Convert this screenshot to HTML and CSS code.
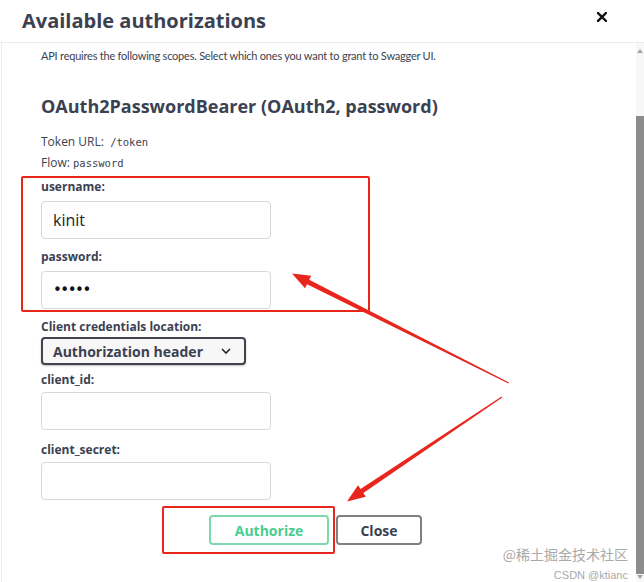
FILE: index.html
```html
<!DOCTYPE html>
<html lang="en">
<head>
<meta charset="utf-8">
<title>Available authorizations</title>
<link rel="stylesheet" href="styles.css">
</head>
<body>
<div class="modal">
  <div class="modal-header">
    <h3 class="modal-title">Available authorizations</h3>
    <button class="close-x" aria-label="close">
      <svg width="10" height="10" viewBox="0 0 10 10"><path d="M1 1 L9 9 M9 1 L1 9" stroke="#111" stroke-width="2.4" stroke-linecap="square"/></svg>
    </button>
  </div>
  <div class="modal-body">
    <div class="content">
      <p class="scopes">API requires the following scopes. Select which ones you want to grant to Swagger UI.</p>
      <h4 class="scheme">OAuth2PasswordBearer (OAuth2, password)</h4>
      <p class="meta meta-url">Token URL:&nbsp; <code>/token</code></p>
      <p class="meta meta-flow">Flow: <code>password</code></p>
      <label class="lbl lbl-first">username:</label>
      <div class="input">kinit</div>
      <label class="lbl">password:</label>
      <div class="input dots">•••••</div>
      <label class="lbl">Client credentials location:</label>
      <div class="select">
        <span>Authorization header</span>
        <svg width="10" height="6" viewBox="0 0 10 6"><path d="M1 1 L5 5 L9 1" fill="none" stroke="#222" stroke-width="1.6"/></svg>
      </div>
      <label class="lbl lbl-cid">client_id:</label>
      <div class="input"></div>
      <label class="lbl lbl-cs">client_secret:</label>
      <div class="input"></div>
      <div class="actions">
        <button class="btn authorize">Authorize</button>
        <button class="btn close">Close</button>
      </div>
    </div>
    <div class="scrollbar">
      <div class="arrow-up"></div>
      <div class="thumb"></div>
      <div class="arrow-down"></div>
    </div>
  </div>

  <div class="mark mark-fields"></div>
  <div class="mark mark-button"></div>
  <svg class="arrows" width="644" height="582" viewBox="0 0 644 582">
    <polygon fill="#e8261d" points="509,382.6 309.2,279.8 311.2,275.8 292,273.5 305,288.3 307,284.3 508.4,383.6"/>
    <polygon fill="#e8261d" points="502.3,397.4 363.3,493.1 365.8,496.8 347,501.5 358,485.2 360.5,488.9 501.6,396.4"/>
  </svg>
  <div class="watermark">
    <div class="wm-cn">@稀土掘金技术社区</div>
    <div class="wm-en">CSDN @ktianc</div>
  </div>
</div>
</body>
</html>
```

FILE: styles.css
```css
html, body {
  margin: 0;
  padding: 0;
  background: #fff;
}

.modal {
  position: relative;
  width: 644px;
  height: 582px;
  overflow: hidden;
  display: flex;
  flex-direction: column;
  font-family: "Open Sans", "Noto Sans", sans-serif;
  color: #3b4151;
}

.modal-header {
  height: 42px;
  flex: none;
  display: flex;
  align-items: center;
  justify-content: space-between;
  padding: 0 37px 0 22px;
  border-bottom: 1px solid #ebebeb;
}

.modal-title {
  margin: 0;
  font-size: 20px;
  font-weight: 700;
  color: #3b4151;
  line-height: 28px;
  margin-top: -1px;
}

.close-x {
  border: 0;
  background: none;
  padding: 0;
  display: flex;
  margin-top: -8px;
}

.modal-body {
  flex: 1;
  display: flex;
  border-left: 1px solid #ececec;
  margin-left: 1px;
}

.content {
  flex: 1;
  padding-left: 39px;
  display: flex;
  flex-direction: column;
  align-items: flex-start;
}

.scopes {
  margin: 5px 0 0;
  font-family: "Lato", "Open Sans", sans-serif;
  font-size: 11px;
  line-height: 16px;
  letter-spacing: -0.22px;
}

.scheme {
  margin: 30px 0 0;
  font-size: 18px;
  line-height: 24px;
  font-weight: 700;
}

.meta {
  margin: 0;
  font-size: 12px;
  line-height: 16px;
}
.meta-url { margin-top: 16px; }
.meta-flow { margin-top: 5px; }

code {
  font-family: "DejaVu Sans Mono", "Liberation Mono", monospace;
  font-size: 10.5px;
}

.lbl {
  display: block;
  font-size: 12px;
  line-height: 16px;
  font-weight: 700;
  margin-top: 10px;
  margin-bottom: 6px;
}
.lbl-first { margin-top: 8px; }
.lbl-cid { margin-top: 7px; margin-bottom: 4px; }
.lbl-cs { margin-top: 12px; margin-bottom: 4px; }

.input {
  box-sizing: border-box;
  width: 230px;
  height: 38px;
  border: 1px solid #d9d9d9;
  border-radius: 4px;
  padding: 0 11px;
  font-size: 16px;
  line-height: 36px;
  color: #222;
  background: #fff;
}
.input.dots {
  font-family: "DejaVu Sans", sans-serif;
  font-size: 15px;
  letter-spacing: -1.5px;
  color: #111;
}

.select {
  box-sizing: border-box;
  margin-top: -4px;
  width: 205px;
  height: 28px;
  border: 2px solid #41444e;
  border-radius: 4px;
  background: #f7f7f7;
  box-shadow: 0 1px 2px rgba(0,0,0,0.25);
  display: flex;
  align-items: center;
  justify-content: space-between;
  padding: 0 13px 0 10px;
  font-size: 14px;
  font-weight: 700;
  color: #3b4151;
}

.actions {
  display: flex;
  gap: 7px;
  margin-top: 15px;
  margin-left: 168px;
}

.btn {
  box-sizing: border-box;
  height: 30px;
  border-radius: 4px;
  background: #fff;
  font-family: "Open Sans", "Noto Sans", sans-serif;
  font-size: 14px;
  font-weight: 700;
  padding: 0;
}
.authorize {
  width: 120px;
  border: 2px solid #7dd8ae;
  color: #49cc90;
}
.close {
  width: 86px;
  border: 2px solid #808080;
  color: #3b4151;
}

.scrollbar {
  width: 8px;
  flex: none;
  display: flex;
  flex-direction: column;
  align-items: center;
  background: #f7f7f7;
  padding: 6px 0 3px;
}
.arrow-up {
  width: 0;
  height: 0;
  border-left: 3px solid transparent;
  border-right: 3px solid transparent;
  border-bottom: 4px solid #a3a3a3;
}
.thumb {
  margin-top: 63px;
  width: 8px;
  flex: 1;
  background: #8c8c8c;
}
.arrow-down {
  margin-top: 1px;
  width: 0;
  height: 0;
  border-left: 3px solid transparent;
  border-right: 3px solid transparent;
  border-top: 4px solid #a3a3a3;
}

.mark {
  position: absolute;
  border: 2.5px solid #e8261d;
  border-radius: 2px;
  box-sizing: border-box;
}
.mark-fields {
  left: 21px;
  top: 176px;
  width: 349px;
  height: 136px;
}
.mark-button {
  left: 162px;
  top: 506px;
  width: 173px;
  height: 48px;
}

.arrows {
  position: absolute;
  left: 0;
  top: 0;
  pointer-events: none;
}

.watermark {
  position: absolute;
  right: 16px;
  top: 547px;
  text-align: right;
  color: #a9a9a9;
  font-family: "Noto Sans CJK SC", "Noto Sans", sans-serif;
  line-height: 1;
}
.wm-cn {
  font-size: 14px;
  height: 20px;
}
.wm-en {
  font-family: "Liberation Sans", sans-serif;
  font-size: 11px;
  margin-top: 3px;
}
```
